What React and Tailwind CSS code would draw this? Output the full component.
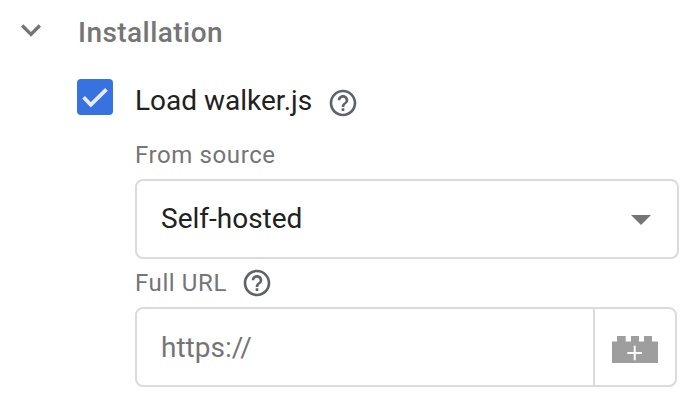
function HelpIcon({ className }) {
  return (
    <svg viewBox="0 0 24 24" fill="#5f6368" className={`size-8 shrink-0 ${className}`}>
      <path d="M11 18h2v-2h-2v2zm1-16C6.48 2 2 6.48 2 12s4.48 10 10 10 10-4.48 10-10S17.52 2 12 2zm0 18c-4.41 0-8-3.59-8-8s3.59-8 8-8 8 3.59 8 8-3.59 8-8 8zm0-14c-2.21 0-4 1.79-4 4h2c0-1.1.9-2 2-2s2 .9 2 2c0 2-3 1.75-3 5h2c0-2.25 3-2.5 3-5 0-2.21-1.79-4-4-4z" />
    </svg>
  );
}

function BrickIcon() {
  return (
    <svg viewBox="0 0 46 27" className="h-[27px] w-[46px]">
      <path d="M0 5.5H5V0h8.7v5.5H19V0h8v5.5h5V0h8v5.5h6V27H0z" fill="#9e9e9e" />
      <path d="M15.3 17H30M22.7 9.7V24.3" stroke="#fff" strokeWidth="2" />
    </svg>
  );
}

export default function App() {
  return (
    <div className="h-[400px] w-[696px] overflow-hidden bg-white font-['Roboto','Liberation_Sans',sans-serif] text-[28px] text-[#212121]">
      <div className="flex h-16 items-center pl-[11px]">
        <svg viewBox="0 0 24 24" fill="#757575" className="-mt-1 size-10 shrink-0">
          <path d="M16.59 8.59L12 13.17 7.41 8.59 6 10l6 6 6-6z" />
        </svg>
        <h2 className="ml-[27px] pt-0.5 font-medium leading-10 tracking-[0.45px] text-[#757575]">Installation</h2>
      </div>

      <div className="flex h-[66px] items-center pl-[77px]">
        <span role="checkbox" aria-checked="true" className="flex size-9 items-center justify-center rounded-[4px] bg-[#3872e0]">
          <svg viewBox="0 0 36 36" fill="none" stroke="#e8eaed" strokeWidth="3.8" className="size-9">
            <path d="M6.6 18.2L13.8 25.8L29.4 10.4" />
          </svg>
        </span>
        <span className="ml-[22px] pt-[7px] leading-10">Load walker.js</span>
        <HelpIcon className="mt-3 ml-[15px]" />
      </div>

      <div className="flex flex-col pl-[135px]">
        <div className="flex h-[49px] items-center text-2xl tracking-[0.6px] text-[#757575]">From source</div>
        <div className="flex h-20 w-[544px] items-center justify-between rounded-lg border-2 border-[#dadae0] pr-[26px] pl-6">
          <span>Self-hosted</span>
          <svg viewBox="0 0 20 10" className="mt-0.5 h-2.5 w-5" fill="#757575">
            <path d="M0 0H20L10 10z" />
          </svg>
        </div>
        <div className="flex h-12 items-center text-2xl tracking-[0.6px] text-[#757575]">
          <span>Full URL</span>
          <HelpIcon className="ml-3.5" />
        </div>
        <div className="flex h-20 w-[542px] rounded-lg border-2 border-[#dadae0]">
          <div className="flex flex-1 items-center pt-0.5 pl-6 text-[#757575]">https://</div>
          <div className="flex w-[82px] items-center border-l-2 border-[#dadae0] pt-[5px] pl-[17px]">
            <BrickIcon />
          </div>
        </div>
      </div>
    </div>
  );
}
